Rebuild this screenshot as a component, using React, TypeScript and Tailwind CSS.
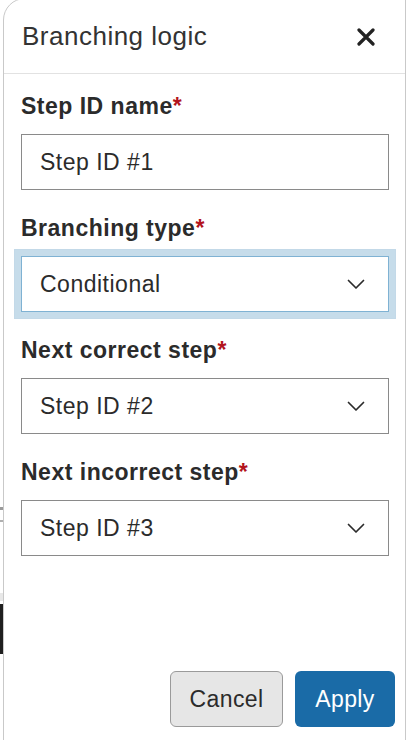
import React from "react";

function Chevron() {
  return (
    <svg width="18" height="11" viewBox="0 0 18 11" fill="none" className="shrink-0">
      <polyline points="1.5,1.5 9,9 16.5,1.5" stroke="#2b2b2b" strokeWidth="1.7" strokeLinecap="round" strokeLinejoin="round" />
    </svg>
  );
}

function Label({ text }: { text: string }) {
  return (
    <div className="h-[24px] leading-[24px] text-[23px] font-bold tracking-[0.5px] text-[#2b2b2b] mb-[16px]">
      {text}
      <span className="text-[#b3141c]">*</span>
    </div>
  );
}

function SelectBox({ value, focused }: { value: string; focused?: boolean }) {
  const box = (
    <div
      className={
        focused
          ? "h-[56px] border border-[#7fb2d3] bg-white flex items-center justify-between pl-[18px] pr-[23px]"
          : "h-[56px] border border-[#8a8a8a] bg-white flex items-center justify-between pl-[18px] pr-[23px]"
      }
    >
      <span className="text-[23px] tracking-[0.5px] text-[#2b2b2b] pt-[1px]">{value}</span>
      <Chevron />
    </div>
  );
  if (focused) {
    return <div className="-mx-[7px] -my-[7px] p-[6px] border border-[#c3d9e8] bg-[#c6dcea]">{box}</div>;
  }
  return box;
}

export default function App() {
  return (
    <div
      className="w-[409px] h-[740px] bg-white relative overflow-hidden"
      style={{ fontFamily: '"Liberation Sans", Arial, sans-serif' }}
    >
      <div className="absolute left-0 top-[507px] w-[3px] h-[3px] bg-[#9a9a9a]" />
      <div className="absolute left-0 top-[520px] w-[3px] h-[2px] bg-[#b0b0b0]" />
      <div className="absolute left-0 top-[593px] w-[3px] h-[8px] bg-[#e8e8e8]" />
      <div className="absolute left-0 top-[604px] w-[3px] h-[50px] bg-[#1f1f1f]" />
      <div className="ml-[3px] w-[403px] h-[745px] -mt-[2px] border border-[#c9c9c9] rounded-tl-[22px] bg-white flex flex-col">
        <div className="h-[75px] shrink-0 flex items-center justify-between pl-[18px] pr-[30px] border-b border-[#e2e2e2] pt-[1px]">
          <span className="text-[26px] tracking-[0.5px] text-[#333333]">Branching logic</span>
          <svg width="18" height="18" viewBox="0 0 18 18" className="shrink-0">
            <path d="M2 2 L16 16 M16 2 L2 16" stroke="#222222" strokeWidth="3.2" strokeLinecap="round" />
          </svg>
        </div>
        <div className="pl-[17px] pr-[16px] pt-[20px] flex flex-col gap-[26px]">
          <div>
            <Label text="Step ID name" />
            <div className="h-[56px] border border-[#8a8a8a] bg-white flex items-center pl-[18px]">
              <span className="text-[23px] tracking-[0.5px] text-[#2b2b2b] pt-[1px]">Step ID #1</span>
            </div>
          </div>
          <div>
            <Label text="Branching type" />
            <SelectBox value="Conditional" focused />
          </div>
          <div>
            <Label text="Next correct step" />
            <SelectBox value="Step ID #2" />
          </div>
          <div>
            <Label text="Next incorrect step" />
            <SelectBox value="Step ID #3" />
          </div>
        </div>
        <div className="mt-auto flex justify-end gap-[12px] pr-[10px] pb-[15px]">
          <button className="w-[113px] h-[56px] rounded-[6px] border border-[#9a9a9a] bg-[#e6e6e6] text-[23px] tracking-[0.4px] text-[#2b2b2b]">
            Cancel
          </button>
          <button className="w-[100px] h-[56px] rounded-[6px] bg-[#1a6ba7] text-[23px] tracking-[0.4px] text-white">
            Apply
          </button>
        </div>
      </div>
    </div>
  );
}
